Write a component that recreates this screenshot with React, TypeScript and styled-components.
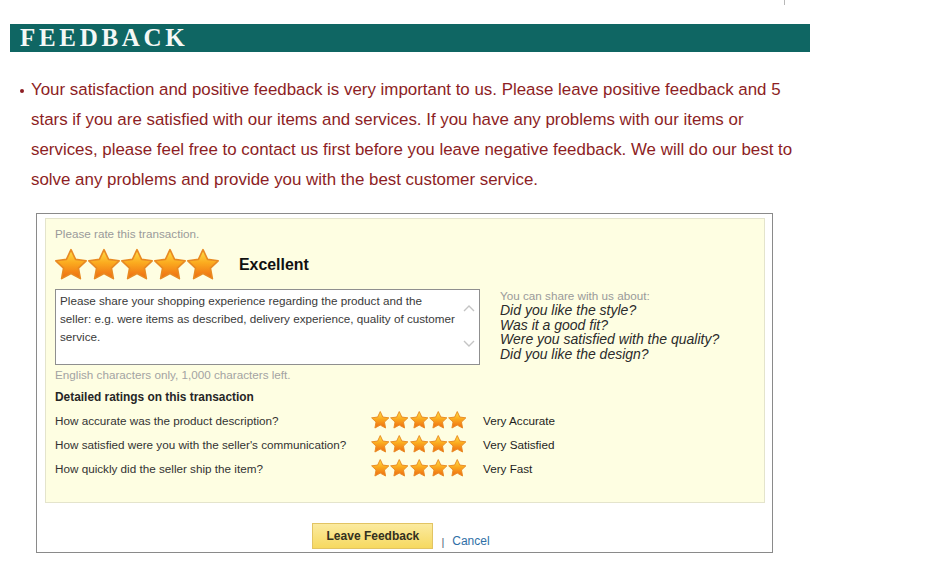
import React, { useId } from "react";
import styled, { createGlobalStyle } from "styled-components";

const GlobalStyle = createGlobalStyle`
  html, body {
    margin: 0;
    padding: 0;
    background: #ffffff;
  }
  body {
    font-family: "Liberation Sans", Arial, sans-serif;
  }
`;

const Page = styled.div`
  width: 941px;
  height: 577px;
  padding-top: 24px;
  box-sizing: border-box;
  position: relative;
  overflow: hidden;
`;

const TopTick = styled.span`
  position: absolute;
  left: 784px;
  top: 0;
  width: 1px;
  height: 5px;
  background: #b8b8b8;
`;

const Banner = styled.div`
  margin-left: 10px;
  width: 800px;
  height: 28px;
  background: #0f6663;
  display: flex;
  align-items: center;
  padding-left: 10px;
  box-sizing: border-box;
`;

const BannerTitle = styled.h1`
  margin: 0;
  font-family: "Liberation Serif", "Times New Roman", serif;
  font-weight: bold;
  font-size: 25px;
  letter-spacing: 3.7px;
  color: #f4f8f6;
  line-height: 28px;
`;

const Notice = styled.ul`
  margin: 23px 0 0 0;
  padding: 0 0 0 31px;
  width: 782px;
  list-style: none;
`;

const NoticeItem = styled.li`
  position: relative;
  font-size: 16.9px;
  line-height: 30px;
  color: #8d1e24;

  &::before {
    content: "";
    position: absolute;
    left: -11px;
    top: 14px;
    width: 4px;
    height: 4px;
    border-radius: 50%;
    background: #8d1e24;
  }
`;

const FormBox = styled.div`
  margin: 18px 0 0 36px;
  width: 737px;
  height: 340px;
  border: 1px solid #8a8a8a;
  box-sizing: border-box;
  padding: 4px 7px 0 8px;
  display: flex;
  flex-direction: column;
`;

const Panel = styled.div`
  background: #fefee2;
  border: 1px solid #e4e4cc;
  height: 285px;
  box-sizing: border-box;
  padding: 8px 10px 0 9px;
  display: flex;
  flex-direction: column;
`;

const Hint = styled.div<{ $tone?: string }>`
  font-size: 11.7px;
  line-height: 14px;
  color: ${(p) => p.$tone || "#9a9a9a"};
`;

const StarRow = styled.div`
  display: flex;
  align-items: center;
  margin-top: 8px;
  height: 32px;
`;

const Stars = styled.div<{ $overlap: number }>`
  display: flex;
  margin-left: -2px;

  & > svg + svg {
    margin-left: -${(p) => p.$overlap}px;
  }
`;

const Verdict = styled.span`
  margin-left: 18px;
  font-size: 15.9px;
  font-weight: bold;
  color: #111;
`;

const Middle = styled.div`
  display: flex;
  margin-top: 8px;
`;

const FakeTextarea = styled.div`
  position: relative;
  width: 425px;
  height: 76px;
  box-sizing: border-box;
  border: 1px solid #8f8f8f;
  background: #fff;
  padding: 2px 20px 0 4px;
  font-size: 11.7px;
  line-height: 18px;
  color: #3a3a3a;
  white-space: pre-line;
`;

const ScrollArrow = styled.svg<{ $pos: "up" | "down" }>`
  position: absolute;
  right: 4px;
  ${(p) => (p.$pos === "up" ? "top: 14px;" : "bottom: 16px;")}
  width: 12px;
  height: 8px;
`;

const Suggest = styled.div`
  margin-left: 20px;
`;

const SuggestLine = styled.div`
  font-size: 14px;
  line-height: 14.7px;
  font-style: italic;
  color: #2b2b2b;
`;

const CharCount = styled(Hint)`
  margin-top: 3px;
  color: #a3a3a3;
`;

const DetailTitle = styled.div`
  margin-top: 8px;
  font-size: 11.9px;
  font-weight: bold;
  line-height: 14px;
  color: #262626;
`;

const Ratings = styled.div`
  margin-top: 4px;
  display: grid;
  grid-template-columns: 317px 111px auto;
  grid-auto-rows: 24px;
  align-items: center;
`;

const Question = styled.span`
  font-size: 11.7px;
  color: #333;
`;

const Level = styled.span`
  font-size: 11.7px;
  color: #1e1e1e;
`;

const Actions = styled.div`
  margin-top: 20px;
  display: flex;
  justify-content: center;
  align-items: flex-end;
  padding-right: 8px;
`;

const PrimaryButton = styled.button`
  width: 121px;
  height: 26px;
  border: 1px solid #e2c464;
  background: linear-gradient(#fbeaa0, #f6d960);
  font-family: "Liberation Sans", Arial, sans-serif;
  font-size: 12px;
  font-weight: bold;
  color: #33301f;
  padding: 0;
  cursor: pointer;
`;

const Divider = styled.span`
  margin: 0 8px 0 8px;
  font-size: 11px;
  color: #4d6478;
  line-height: 14px;
`;

const CancelLink = styled.a`
  font-size: 12px;
  line-height: 15px;
  color: #2f6fa6;
  text-decoration: none;
`;

const Star = ({ size }: { size: number }) => {
  const id = useId();
  return (
    <svg width={size} height={size} viewBox="0 0 24 24">
      <defs>
        <linearGradient id={id} x1="0" y1="0" x2="0" y2="1">
          <stop offset="0" stopColor="#ffe04a" />
          <stop offset="0.45" stopColor="#fbab1f" />
          <stop offset="1" stopColor="#ee6a12" />
        </linearGradient>
      </defs>
      <path
        d="M12 1.8l3.05 6.45 7.05.95-5.15 4.9 1.3 7-6.25-3.4-6.25 3.4 1.3-7-5.15-4.9 7.05-.95z"
        fill={`url(#${id})`}
        stroke="#e88a22"
        strokeWidth="1.1"
        strokeLinejoin="round"
      />
    </svg>
  );
};

const StarSet = ({ size, overlap }: { size: number; overlap: number }) => (
  <Stars $overlap={overlap}>
    {[0, 1, 2, 3, 4].map((i) => (
      <Star key={i} size={size} />
    ))}
  </Stars>
);

const ratings = [
  { q: "How accurate was the product description?", a: "Very Accurate" },
  { q: "How satisfied were you with the seller's communication?", a: "Very Satisfied" },
  { q: "How quickly did the seller ship the item?", a: "Very Fast" },
];

const prompts = [
  "Did you like the style?",
  "Was it a good fit?",
  "Were you satisfied with the quality?",
  "Did you like the design?",
];

const placeholder = `Please share your shopping experience regarding the product and the
seller: e.g. were items as described, delivery experience, quality of customer
service.`;

export default function App() {
  return (
    <>
      <GlobalStyle />
      <Page>
        <TopTick />
        <Banner>
          <BannerTitle>FEEDBACK</BannerTitle>
        </Banner>
        <Notice>
          <NoticeItem>
            Your satisfaction and positive feedback is very important to us. Please leave positive
            feedback and 5 stars if you are satisfied with our items and services. If you have any
            problems with our items or services, please feel free to contact us first before you
            leave negative feedback. We will do our best to solve any problems and provide you with
            the best customer service.
          </NoticeItem>
        </Notice>
        <FormBox>
          <Panel>
            <Hint>Please rate this transaction.</Hint>
            <StarRow>
              <StarSet size={36} overlap={3} />
              <Verdict>Excellent</Verdict>
            </StarRow>
            <Middle>
              <FakeTextarea>
                {placeholder}
                <ScrollArrow $pos="up" viewBox="0 0 12 8">
                  <path d="M1 7l5-5 5 5" fill="none" stroke="#c4c4c4" strokeWidth="1.4" />
                </ScrollArrow>
                <ScrollArrow $pos="down" viewBox="0 0 12 8">
                  <path d="M1 1l5 5 5-5" fill="none" stroke="#c4c4c4" strokeWidth="1.4" />
                </ScrollArrow>
              </FakeTextarea>
              <Suggest>
                <Hint>You can share with us about:</Hint>
                {prompts.map((p) => (
                  <SuggestLine key={p}>{p}</SuggestLine>
                ))}
              </Suggest>
            </Middle>
            <CharCount>English characters only, 1,000 characters left.</CharCount>
            <DetailTitle>Detailed ratings on this transaction</DetailTitle>
            <Ratings>
              {ratings.map((r) => (
                <React.Fragment key={r.q}>
                  <Question>{r.q}</Question>
                  <StarSet size={20.5} overlap={1.2} />
                  <Level>{r.a}</Level>
                </React.Fragment>
              ))}
            </Ratings>
          </Panel>
          <Actions>
            <PrimaryButton>Leave Feedback</PrimaryButton>
            <Divider>|</Divider>
            <CancelLink href="#">Cancel</CancelLink>
          </Actions>
        </FormBox>
      </Page>
    </>
  );
}
